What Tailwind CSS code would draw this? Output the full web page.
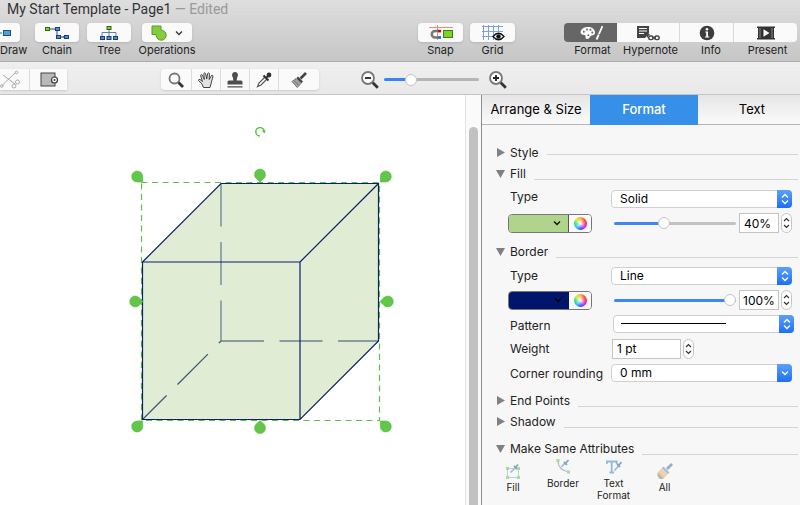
<!DOCTYPE html>
<html lang="en">
<head>
    <meta charset="UTF-8">
    <meta name="viewport" content="width=device-width, initial-scale=1.0">
    <title>My Start Template - Page1</title>
    <script src="https://cdn.jsdelivr.net/npm/@tailwindcss/browser@4"></script>
</head>
<body class="flex flex-col min-h-screen bg-white text-[#222] overflow-hidden font-['Inter','Liberation_Sans',sans-serif]">

    <!-- Title bar and main toolbar -->
    <header class="bg-linear-to-b from-[#dedede] to-[#c6c6c6] border-b border-[#acacac]">
        <h1 class="pl-[7px] text-sm leading-[18px] text-[#333] whitespace-nowrap font-[Roboto,'Liberation_Sans',sans-serif]">My Start Template - Page1 <span class="text-[#999]">— Edited</span></h1>
        <nav class="flex items-start pt-[5px] pb-[3px] pr-[3px] text-[11px] leading-4">
            <button class="flex flex-col w-[27px]">
                <span class="flex items-center w-5 h-[19px] bg-[#fafafa] rounded-r shadow-sm">
                    <svg class="w-4 h-3" viewBox="0 0 16 12" aria-hidden="true"><path d="M0 6h2" stroke="#29abe2" stroke-width="1.5"/><rect x="3.500" y="3.500" width="7" height="5" fill="#5b9bd5" stroke="#1f4e8c"/></svg>
                </span>
                <span>Draw</span>
            </button>
            <button class="flex flex-col items-center w-11 ml-2">
                <span class="flex items-center justify-center w-full h-[19px] bg-[#fafafa] rounded shadow-sm">
                    <svg class="w-6 h-4" viewBox="0 0 24 16" aria-hidden="true"><path d="M5 4h5M12 6v6h3M18 12h1" fill="none" stroke="#1c4587"/><g stroke="#1c3f77"><rect x=".5" y="2.500" width="4" height="3" fill="#7ed321" stroke="#2c6b10"/><rect x="10.500" y="2.500" width="4" height="3" fill="#4a90d9"/><rect x="11.500" y="10.500" width="4" height="3" fill="#4a90d9"/><rect x="19.500" y="10.500" width="4" height="3" fill="#4a90d9"/><path d="M16 12h3"/></g></svg>
                </span>
                Chain
            </button>
            <button class="flex flex-col items-center w-11 ml-2">
                <span class="flex items-center justify-center w-full h-[19px] bg-[#fafafa] rounded shadow-sm">
                    <svg class="w-5 h-4" viewBox="0 0 20 16" aria-hidden="true"><path d="M10 4v7M3 11V7.500h14V11" fill="none" stroke="#5b7fb5"/><rect x="8" y="1.500" width="4" height="3" fill="#7ed321" stroke="#2c6b10"/><g fill="#4a90d9" stroke="#1c3f77"><rect x="1.500" y="11.500" width="4" height="3"/><rect x="8" y="11.500" width="4" height="3"/><rect x="14.500" y="11.500" width="4" height="3"/></g></svg>
                </span>
                Tree
            </button>
            <button class="flex flex-col items-center w-[50px] ml-[11px]">
                <span class="flex items-center justify-center gap-2 w-full h-[19px] bg-[#fafafa] rounded shadow-sm">
                    <svg class="w-4 h-4" viewBox="0 0 16 16" aria-hidden="true"><path d="M1 1h9v4.200a5 5 0 1 1-4.800 5.600Q5 10 5 9.500H1z" fill="#84cc3c" stroke="#4f9e23"/></svg>
                    <svg class="w-2 h-2" viewBox="0 0 8 8" aria-hidden="true"><path d="M1 2.500l3 3 3-3" fill="none" stroke="#333" stroke-width="1.300"/></svg>
                </span>
                Operations
            </button>
            <button class="flex flex-col items-center w-[45px] ml-[226px]">
                <span class="flex items-center justify-center w-full h-[19px] bg-[#fafafa] rounded shadow-sm">
                    <svg class="w-6 h-4" viewBox="0 0 24 16" aria-hidden="true"><path d="M0 2.500h24M8.500 0v15" stroke="#ef8a72"/><path d="M9 6H6a3 3 0 0 0 0 6.500h3" fill="none" stroke="#777" stroke-width="2.400"/><path d="M9 4.800h3v2.600H9z" fill="#d0021b"/><path d="M9 11.200h3v2.600H9z" fill="#1565e0"/><rect x="14.500" y="5.500" width="9" height="7" fill="#7ed321" stroke="#3f7a1c"/></svg>
                </span>
                Snap
            </button>
            <button class="flex flex-col items-center w-[45px] ml-[7px]">
                <span class="flex items-center justify-center w-full h-[19px] bg-[#fafafa] rounded shadow-sm">
                    <svg class="w-6 h-4" viewBox="0 0 24 16" aria-hidden="true"><path d="M1 1.500h21M1 6.500h21M1 11.500h12M2.500 0v15M7.500 0v15M12.500 0v15M17.500 0v7" stroke="#7ba0dc"/><path d="M12 11.500q5.500-6.500 11 0q-5.500 6.500-11 0z" fill="#fff" stroke="#111" stroke-width="1.300"/><circle cx="17.500" cy="11.500" r="2.200" fill="#111"/></svg>
                </span>
                Grid
            </button>

            <div class="flex ml-auto text-[#222]">
                <button class="flex flex-col items-center w-[53px]">
                    <span class="flex items-center justify-center w-full h-[19px] bg-[#666] rounded-l">
                        <svg class="w-6 h-4" viewBox="0 0 24 16" aria-hidden="true"><path d="M8.500 2C13 2 16 4 16 7.500c0 2-1.500 3-3.500 3-1.500 0-1.500 3.500-4.500 3.500-1.500 0-1.500-1.500-1.500-3 0-1.500-2-1-3.500-1.500C0 8 2 2 8.500 2z" fill="#fff"/><g fill="#666"><circle cx="4.800" cy="6.700" r="1"/><circle cx="8" cy="4.600" r="1"/><circle cx="11.500" cy="4.800" r="1"/><circle cx="13.300" cy="7.600" r="1"/><circle cx="9.300" cy="10.200" r="1"/></g><path d="M23.500 1L20 9M19.800 9.500L17.500 14.500" stroke="#fff" stroke-width="1.800"/></svg>
                    </span>
                    <span class="pl-1">Format</span>
                </button>
                <button class="flex flex-col items-center w-[63px]">
                    <span class="flex items-center justify-center w-full h-[19px] bg-[#fafafa] border-r border-[#d8d8d8]">
                        <svg class="w-6 h-4" viewBox="0 0 24 16" aria-hidden="true"><path d="M1 1h12v7l-4 5H1z" fill="#444"/><path d="M3 3.500h8M3 6h8M3 8.500h5" stroke="#fff"/><path d="M10 8.500l4 .5-3 4z" fill="#444"/><g fill="none" stroke="#444" stroke-width="1.400"><rect x="12.700" y="11" width="4.500" height="3.600" rx="1.800"/><rect x="18.700" y="11" width="4.500" height="3.600" rx="1.800"/><path d="M16 12.800h4"/></g></svg>
                    </span>
                    <span class="pl-1">Hypernote</span>
                </button>
                <button class="flex flex-col items-center w-[54px]">
                    <span class="flex items-center justify-center w-full h-[19px] bg-[#fafafa] border-r border-[#d8d8d8]">
                        <svg class="w-4 h-4" viewBox="0 0 16 16" aria-hidden="true"><circle cx="8" cy="8" r="7.300" fill="#3d3d3d"/><circle cx="8" cy="4.300" r="1.300" fill="#fff"/><path d="M6.200 6.500H9v5h1.200v1H6v-1h1.200v-4h-1z" fill="#fff"/></svg>
                    </span>
                    <span class="pl-2">Info</span>
                </button>
                <button class="flex flex-col items-center w-[63px]">
                    <span class="flex items-center justify-center w-full h-[19px] bg-[#fafafa] rounded-r">
                        <svg class="w-[18px] h-4" viewBox="0 0 18 16" aria-hidden="true"><path d="M0 1.500h18v1.500h-1v10h1v1.500H0V13h1V3H0z" fill="#333"/><path d="M3 3v10M15 3v10" stroke="#888"/><path d="M6.500 4.200v7.600L12.500 8z" fill="#fff"/></svg>
                    </span>
                    <span class="pl-1">Present</span>
                </button>
            </div>
        </nav>
    </header>

    <!-- Drawing tools and zoom -->
    <div class="flex items-center h-[33px] pt-[3px] bg-linear-to-b from-[#efefef] to-[#e9e9e9] border-b border-[#c4c4c4]">
        <div class="flex h-[21px] bg-[#fafafa] shadow-sm">
            <button class="flex items-center w-[30px] border-r border-[#dcdcdc]" aria-label="Cut connector">
                <svg class="w-5 h-5" viewBox="0 0 20 20" fill="none" stroke="#aaa" aria-hidden="true"><path d="M2 15.500L15 3M3 5l12 9"/><circle cx="16.500" cy="2.500" r="1.300"/><circle cx="1.800" cy="16" r="1.300"/><circle cx="14" cy="16" r="2"/><circle cx="17.500" cy="12" r="2"/></svg>
            </button>
            <button class="flex items-center justify-center w-[37px]" aria-label="Object action">
                <svg class="w-5 h-4" viewBox="0 0 20 16" aria-hidden="true"><rect x="2" y="1" width="14" height="13" fill="#b9b9b9" stroke="#444"/><circle cx="15.500" cy="8" r="3" fill="#fff" stroke="#333" stroke-width="1.200"/><circle cx="15.500" cy="8" r="1" fill="#333"/></svg>
            </button>
        </div>
        <div class="flex h-[21px] ml-[94px] bg-[#fafafa] rounded shadow-sm">
            <button class="flex items-center justify-center w-[31px] border-r border-[#dcdcdc]" aria-label="Magnifier">
                <svg class="w-4 h-4" viewBox="0 0 16 16" fill="none" aria-hidden="true"><circle cx="6.500" cy="6.500" r="5" stroke="#777" stroke-width="1.800"/><path d="M10.500 10.500l4.500 4.500" stroke="#333" stroke-width="2.800"/></svg>
            </button>
            <button class="flex items-center justify-center w-[29px] border-r border-[#dcdcdc]" aria-label="Hand">
                <svg class="w-[18px] h-[18px]" viewBox="0 0 18 18" aria-hidden="true"><path d="M6.500 16.500L5 13 1.500 9.500q0-1.500 1.500-1l2.500 2L3.500 4.500q.5-1.500 1.700-.5L7.300 8.500 6.800 2.500q1-1.500 1.800 0L9.700 8l1-5.500q1-1.200 1.800 0L12.200 8.500l2.300-4q1.300-.7 1.500.6L14.200 12l-1.200 4.500z" fill="#e2e2e2" stroke="#333" stroke-width=".9" stroke-linejoin="round"/></svg>
            </button>
            <button class="flex items-center justify-center w-[29px] border-r border-[#dcdcdc]" aria-label="Stamp">
                <svg class="w-4 h-4" viewBox="0 0 16 16" fill="#4d4d4d" aria-hidden="true"><path d="M8 0a3 3 0 0 1 2.800 4Q9.500 6.500 9.700 8.500H14q1.500 0 1.500 1.500v2.500H.5V10Q.5 8.500 2 8.500h4.300Q6.500 6.500 5.200 4A3 3 0 0 1 8 0zM.5 14.200h15v1.300H.5z"/></svg>
            </button>
            <button class="flex items-center justify-center w-[29px] border-r border-[#dcdcdc]" aria-label="Eyedropper">
                <svg class="w-4 h-4" viewBox="0 0 16 16" aria-hidden="true"><path d="M9 5L3 11l-1.500 3.500L5 13l6-6" fill="#fff" stroke="#555" stroke-width="1.200"/><path d="M7.500 3.500l5 5M10 6l2.800-2.800" stroke="#333" stroke-width="2"/><circle cx="13" cy="3" r="2.400" fill="#333"/></svg>
            </button>
            <button class="flex items-center justify-center w-[40px]" aria-label="Format brush">
                <svg class="w-4 h-4" viewBox="0 0 16 16" aria-hidden="true"><path d="M15 1L9.500 6.500" stroke="#444" stroke-width="2.600"/><path d="M7 4.500l5 5-1.700 1.700-5-5z" fill="#444"/><path d="M5 6.500l5 5-3.800 4L1 9.500z" fill="#a3a3a3" stroke="#555" stroke-width=".7"/><path d="M3 8.500l5 5" stroke="#555" stroke-width=".7"/></svg>
            </button>
        </div>
        <div class="flex items-center ml-[42px]">
            <button aria-label="Zoom out">
                <svg class="block w-[18px] h-[18px]" viewBox="0 0 18 18" fill="none" aria-hidden="true"><circle cx="7" cy="7" r="6" fill="#fff" stroke="#777" stroke-width="1.800"/><path d="M11.800 11.800l5 5" stroke="#333" stroke-width="2.800"/><path d="M4 7h6" stroke="#222" stroke-width="1.800"/></svg>
            </button>
            <input type="range" value="25" aria-label="Zoom" class="appearance-none w-[95px] h-[3px] mx-[5px] rounded bg-[linear-gradient(to_right,#3b82f6_27%,#b5b5b5_27%)] [&::-webkit-slider-thumb]:appearance-none [&::-webkit-slider-thumb]:size-3 [&::-webkit-slider-thumb]:rounded-full [&::-webkit-slider-thumb]:bg-white [&::-webkit-slider-thumb]:border [&::-webkit-slider-thumb]:border-[#c4c4c4]">
            <button class="ml-[5px]" aria-label="Zoom in">
                <svg class="block w-[18px] h-[18px]" viewBox="0 0 18 18" fill="none" aria-hidden="true"><circle cx="7" cy="7" r="6" fill="#fff" stroke="#777" stroke-width="1.800"/><path d="M11.800 11.800l5 5" stroke="#333" stroke-width="2.800"/><path d="M4 7h6M7 4v6" stroke="#222" stroke-width="1.800"/></svg>
            </button>
        </div>
    </div>

    <main class="flex grow">
        <!-- Canvas with the selected cube -->
        <section class="grow min-w-0 overflow-hidden bg-white" aria-label="Canvas">
            <svg class="block w-[465px] h-[400px]" viewBox="0 95 465 400" fill="none">
                <path d="M142.500 262L221 183.500H378.500V341L300 419.500H142.500z" fill="#e0ecd3"/>
                <path d="M141.500 182.500h238v238h-238z" stroke="#5cc046" stroke-width="1.200" stroke-dasharray="6 4.500"/>
                <g stroke="#6c8391" stroke-width="1.300">
                    <path d="M221 183.500V341" stroke-dasharray="43 15.500"/>
                    <path d="M221 341H378.500" stroke-dasharray="43 15.500"/>
                    <path d="M142.500 419.500L221 341" stroke="#3f5873" stroke-dasharray="43 15.500" stroke-dashoffset="9"/>
                </g>
                <path d="M142.500 262L221 183.500H378.500V341L300 419.500H142.500zM142.500 262H300V419.500M300 262L378.500 183.500" stroke="#0c1f6b" stroke-width="1.200"/>
                <g fill="#62c64b" stroke="#54ba3c" stroke-width=".6">
                    <path d="M142.700 182v-5.500a5.500 5.500 0 1 0-5.500 5.500z"/>
                    <path d="M380.300 182v-5.500a5.500 5.500 0 1 1 5.500 5.500z"/>
                    <path d="M142.700 421v5.500a5.500 5.500 0 1 1-5.500-5.500z"/>
                    <path d="M380.300 421v5.500a5.500 5.500 0 1 0 5.500-5.500z"/>
                    <path d="M260 182l-4-3.700a5.500 5.500 0 1 1 8 0z"/>
                    <path d="M260 420.500l-4 3.700a5.500 5.500 0 1 0 8 0z"/>
                    <path d="M143 301.500l-4-4a5.500 5.500 0 1 0 0 8z"/>
                    <path d="M380 301.500l4-4a5.500 5.500 0 1 1 0 8z"/>
                </g>
                <path d="M260 136a4.200 4.200 0 1 1 4.200-4.200" stroke="#55bd3d" stroke-width="1.400"/>
                <path d="M261.800 130.500h4l-1.500 3z" fill="#55bd3d"/>
            </svg>
        </section>
        <div class="w-4 shrink-0 pl-[3px] pt-8 flex bg-[#fafafa] border-l border-[#e2e2e2]">
            <div class="w-[9px] bg-[#c1c1c1] rounded-t-full"></div>
        </div>

        <!-- Format panel -->
        <aside class="w-[319px] shrink-0 overflow-hidden bg-[#f7f7f7] border-l border-[#8f8f8f] text-xs">
            <div class="flex h-[30px] text-[13px] text-black">
                <button class="w-[108px] shrink-0 bg-linear-to-b from-[#e6e6e6] to-[#fafafa] border-b border-[#b5b5b5]">Arrange &amp; Size</button>
                <button class="w-[108px] shrink-0 bg-[#368fe8] text-white font-medium">Format</button>
                <button class="w-[108px] shrink-0 bg-linear-to-b from-[#e6e6e6] to-[#fafafa] border-b border-[#b5b5b5]">Text</button>
            </div>

            <div class="pt-[17px] pl-[26px]">
                <div class="flex items-center h-[21px] -ml-3 pr-[2px]">
                    <button class="flex items-center gap-[5px]"><svg class="w-[9px] h-[9px]" viewBox="0 0 9 9" fill="#808080" aria-hidden="true"><path d="M1 0l8 4.500L1 9z"/></svg>Style</button>
                    <hr class="grow ml-2 mt-[3px] border-[#d4d4d4]">
                </div>

                <div class="flex items-center h-[21px] -ml-3 pr-[2px]">
                    <button class="flex items-center gap-[5px]"><svg class="w-[9px] h-[9px]" viewBox="0 0 9 9" fill="#808080" aria-hidden="true"><path d="M0 1h9L4.500 9z"/></svg>Fill</button>
                    <hr class="grow ml-2 mt-[11px] border-[#d4d4d4]">
                </div>
                <div class="flex flex-col gap-[5px] pt-[6px] pb-2 pr-2">
                    <div class="flex items-center h-[18px]">
                        <label for="fill-type" class="w-[103px] pl-[2px] pb-1">Type</label>
                        <div class="relative grow h-full">
                            <select id="fill-type" class="appearance-none block w-full h-full pl-2 bg-white border border-[#cfcfcf] rounded text-black"><option>Solid</option></select>
                            <span class="absolute inset-y-0 right-0 flex items-center justify-center w-[15px] bg-linear-to-b from-[#5aa0fb] to-[#1c6ef5] rounded-r pointer-events-none"><svg class="w-2 h-3" viewBox="0 0 8 12" fill="none" stroke="#fff" stroke-width="1.300" aria-hidden="true"><path d="M1 4.500l3-3 3 3M1 7.500l3 3 3-3"/></svg></span>
                        </div>
                    </div>
                    <div class="flex items-center h-5">
                        <div class="flex w-[84px] h-[19px] border border-[#777] rounded overflow-hidden">
                            <button class="flex items-center justify-end grow pr-[7px] bg-[#b1d48c] border-r border-[#555]" aria-label="Fill color"><svg class="w-2 h-2" viewBox="0 0 8 8" fill="none" stroke="#111" stroke-width="1.400" aria-hidden="true"><path d="M1 2.500l3 3 3-3"/></svg></button>
                            <button class="flex items-center justify-center w-[22px] bg-[#fafafa]" aria-label="Fill color picker"><span class="size-[13px] rounded-full bg-[radial-gradient(circle,#fff,transparent_60%),conic-gradient(#ffb02e,#ff4d2e,#ff1f6b,#c020ff,#3a4dff,#22c8f5,#30e070,#c8f03c,#ffb02e)]"></span></button>
                        </div>
                        <input type="range" value="40" aria-label="Fill opacity" class="appearance-none w-[122px] h-[3px] ml-[22px] rounded bg-[linear-gradient(to_right,#3f87f8_41%,#c2c2c2_41%)] [&::-webkit-slider-thumb]:appearance-none [&::-webkit-slider-thumb]:size-3 [&::-webkit-slider-thumb]:rounded-full [&::-webkit-slider-thumb]:bg-white [&::-webkit-slider-thumb]:border [&::-webkit-slider-thumb]:border-[#c4c4c4]">
                        <input type="text" value="40%" aria-label="Fill opacity value" class="w-10 h-5 ml-[3px] pl-1 bg-white border border-[#c4c4c4] text-black">
                        <div class="flex flex-col w-[11px] h-5 ml-[2px] bg-white border border-[#c4c4c4] rounded-full">
                            <button class="flex items-end justify-center grow" aria-label="Increase fill opacity"><svg class="w-[7px] h-[6px]" viewBox="0 0 7 6" fill="none" stroke="#333" stroke-width="1.200" aria-hidden="true"><path d="M1 4l2.500-2.500L6 4"/></svg></button>
                            <button class="flex items-start justify-center grow" aria-label="Decrease fill opacity"><svg class="w-[7px] h-[6px]" viewBox="0 0 7 6" fill="none" stroke="#333" stroke-width="1.200" aria-hidden="true"><path d="M1 2l2.500 2.500L6 2"/></svg></button>
                        </div>
                    </div>
                </div>

                <div class="flex items-center h-[21px] -ml-3 pr-[2px]">
                    <button class="flex items-center gap-[5px]"><svg class="w-[9px] h-[9px]" viewBox="0 0 9 9" fill="#808080" aria-hidden="true"><path d="M0 1h9L4.500 9z"/></svg>Border</button>
                    <hr class="grow ml-2 mt-[11px] border-[#d4d4d4]">
                </div>
                <div class="flex flex-col gap-[5px] pt-[5px] pb-2 pr-2">
                    <div class="flex items-center h-[18px]">
                        <label for="border-type" class="w-[103px] pl-[2px]">Type</label>
                        <div class="relative grow h-full">
                            <select id="border-type" class="appearance-none block w-full h-full pl-2 bg-white border border-[#cfcfcf] rounded text-black"><option>Line</option></select>
                            <span class="absolute inset-y-0 right-0 flex items-center justify-center w-[15px] bg-linear-to-b from-[#5aa0fb] to-[#1c6ef5] rounded-r pointer-events-none"><svg class="w-2 h-3" viewBox="0 0 8 12" fill="none" stroke="#fff" stroke-width="1.300" aria-hidden="true"><path d="M1 4.500l3-3 3 3M1 7.500l3 3 3-3"/></svg></span>
                        </div>
                    </div>
                    <div class="flex items-center h-5">
                        <div class="flex w-[84px] h-[19px] border border-[#777] rounded overflow-hidden">
                            <button class="flex items-center justify-end grow pr-[7px] bg-[#00156b]" aria-label="Border color"><svg class="w-2 h-2" viewBox="0 0 8 8" fill="none" stroke="#000" stroke-width="1.400" aria-hidden="true"><path d="M1 2.500l3 3 3-3"/></svg></button>
                            <button class="flex items-center justify-center w-[22px] bg-[#fafafa]" aria-label="Border color picker"><span class="size-[13px] rounded-full bg-[radial-gradient(circle,#fff,transparent_60%),conic-gradient(#ffb02e,#ff4d2e,#ff1f6b,#c020ff,#3a4dff,#22c8f5,#30e070,#c8f03c,#ffb02e)]"></span></button>
                        </div>
                        <input type="range" value="100" aria-label="Border opacity" class="appearance-none w-[122px] h-[3px] ml-[22px] rounded bg-[#3f87f8] [&::-webkit-slider-thumb]:appearance-none [&::-webkit-slider-thumb]:size-3 [&::-webkit-slider-thumb]:rounded-full [&::-webkit-slider-thumb]:bg-white [&::-webkit-slider-thumb]:border [&::-webkit-slider-thumb]:border-[#c4c4c4]">
                        <input type="text" value="100%" aria-label="Border opacity value" class="w-10 h-5 ml-[3px] pl-[3px] bg-white border border-[#c4c4c4] text-black">
                        <div class="flex flex-col w-[11px] h-5 ml-[2px] bg-white border border-[#c4c4c4] rounded-full">
                            <button class="flex items-end justify-center grow" aria-label="Increase border opacity"><svg class="w-[7px] h-[6px]" viewBox="0 0 7 6" fill="none" stroke="#333" stroke-width="1.200" aria-hidden="true"><path d="M1 4l2.500-2.500L6 4"/></svg></button>
                            <button class="flex items-start justify-center grow" aria-label="Decrease border opacity"><svg class="w-[7px] h-[6px]" viewBox="0 0 7 6" fill="none" stroke="#333" stroke-width="1.200" aria-hidden="true"><path d="M1 2l2.500 2.500L6 2"/></svg></button>
                        </div>
                    </div>
                    <div class="flex items-center h-[18px]">
                        <label for="pattern" class="w-[105px] pl-[2px] pt-1">Pattern</label>
                        <div class="relative grow h-full -mr-[2px]">
                            <select id="pattern" class="appearance-none block w-full h-full bg-white border border-[#cfcfcf] rounded"><option value="solid"></option></select>
                            <span class="absolute left-2 top-2 w-[105px] border-t border-black pointer-events-none"></span>
                            <span class="absolute inset-y-0 right-0 flex items-center justify-center w-[15px] bg-linear-to-b from-[#5aa0fb] to-[#1c6ef5] rounded-r pointer-events-none"><svg class="w-2 h-3" viewBox="0 0 8 12" fill="none" stroke="#fff" stroke-width="1.300" aria-hidden="true"><path d="M1 4.500l3-3 3 3M1 7.500l3 3 3-3"/></svg></span>
                        </div>
                    </div>
                    <div class="flex items-center h-[21px]">
                        <label for="weight" class="w-[104px] pl-[2px] pt-px">Weight</label>
                        <input id="weight" type="text" value="1 pt" class="w-[69px] h-5 pl-1 bg-white border border-[#c4c4c4] text-black">
                        <div class="flex flex-col w-[11px] h-5 ml-[2px] bg-white border border-[#c4c4c4] rounded-full">
                            <button class="flex items-end justify-center grow" aria-label="Increase weight"><svg class="w-[7px] h-[6px]" viewBox="0 0 7 6" fill="none" stroke="#333" stroke-width="1.200" aria-hidden="true"><path d="M1 4l2.500-2.500L6 4"/></svg></button>
                            <button class="flex items-start justify-center grow" aria-label="Decrease weight"><svg class="w-[7px] h-[6px]" viewBox="0 0 7 6" fill="none" stroke="#333" stroke-width="1.200" aria-hidden="true"><path d="M1 2l2.500 2.500L6 2"/></svg></button>
                        </div>
                    </div>
                    <div class="flex items-center h-[18px]">
                        <label for="corner" class="w-[103px] pl-[2px] pt-[2px] whitespace-nowrap">Corner rounding</label>
                        <div class="relative grow h-full">
                            <select id="corner" class="appearance-none block w-full h-full pl-2 bg-white border border-[#cfcfcf] rounded text-black"><option>0 mm</option></select>
                            <span class="absolute inset-y-0 right-0 flex items-center justify-center w-[15px] bg-linear-to-b from-[#5aa0fb] to-[#1c6ef5] rounded-r pointer-events-none"><svg class="w-2 h-2" viewBox="0 0 8 8" fill="none" stroke="#fff" stroke-width="1.300" aria-hidden="true"><path d="M1 2.500l3 3 3-3"/></svg></span>
                        </div>
                    </div>
                </div>

                <div class="flex items-center h-[21px] -ml-3 pr-[2px]">
                    <button class="flex items-center gap-[5px]"><svg class="w-[9px] h-[9px]" viewBox="0 0 9 9" fill="#808080" aria-hidden="true"><path d="M1 0l8 4.500L1 9z"/></svg>End Points</button>
                    <hr class="grow ml-2 mt-[11px] border-[#d4d4d4]">
                </div>
                <div class="flex items-center h-[21px] -ml-3 pr-[2px]">
                    <button class="flex items-center gap-[5px]"><svg class="w-[9px] h-[9px]" viewBox="0 0 9 9" fill="#808080" aria-hidden="true"><path d="M1 0l8 4.500L1 9z"/></svg>Shadow</button>
                    <hr class="grow ml-2 mt-[11px] border-[#d4d4d4]">
                </div>
                <div class="flex items-center h-[21px] mt-[6px] -ml-3 pr-[2px]">
                    <button class="flex items-center gap-[5px]"><svg class="w-[9px] h-[9px]" viewBox="0 0 9 9" fill="#808080" aria-hidden="true"><path d="M0 1h9L4.500 9z"/></svg>Make Same Attributes</button>
                    <hr class="grow ml-2 mt-[11px] border-[#d4d4d4]">
                </div>
                <div class="flex items-start -ml-5 text-[10px] leading-3">
                    <button class="flex flex-col items-center gap-[2px] w-[50px] pt-1">
                        <svg class="w-4 h-4" viewBox="0 0 16 16" fill="none" aria-hidden="true"><path d="M2.500 5.500h11v9h-11z" stroke="#b8cfe0"/><path d="M5.500 9.500l4-4" stroke="#9dbbd2" stroke-width="1.600"/><path d="M9 3l3 3M10.500 4.500L13 1.500" stroke="#82a5c0" stroke-width="1.800"/><path d="M1 4h3v3H1zM12 4h3v3h-3zM1 13h3v3H1zM12 13h3v3h-3z" fill="#a9dc98"/></svg>
                        Fill
                    </button>
                    <button class="flex flex-col items-center gap-[2px] w-[50px]">
                        <svg class="w-4 h-4" viewBox="0 0 16 16" fill="none" aria-hidden="true"><path d="M3 2q0 9 11 11" stroke="#a6bfd2" stroke-width="1.200"/><path d="M6.500 8l3-3.500" stroke="#9dbbd2" stroke-width="1.600"/><path d="M9 3l3 3M10.500 4.500L13.500 1" stroke="#82a5c0" stroke-width="1.800"/><path d="M1.500 0h3v3h-3zM12 11.500h3v3h-3z" fill="#a9dc98"/></svg>
                        Border
                    </button>
                    <button class="flex flex-col items-center gap-[2px] w-[51px]">
                        <svg class="w-4 h-4" viewBox="0 0 16 16" fill="none" aria-hidden="true"><path d="M.800 5V2.500h9.900V5M5.700 2.500v11M3.500 13.500h4.500" stroke="#94b8d8" stroke-width="1.800"/><path d="M8.500 11.500l4-4.500" stroke="#9dbbd2" stroke-width="1.600"/><path d="M11 5l3 3M12.500 6.500L15.500 3" stroke="#82a5c0" stroke-width="1.800"/></svg>
                        Text<br>Format
                    </button>
                    <button class="flex flex-col items-center gap-[2px] w-[51px] pt-1">
                        <svg class="w-4 h-4" viewBox="0 0 16 16" fill="none" aria-hidden="true"><path d="M15 1L10 6" stroke="#93b0c8" stroke-width="2.800"/><path d="M6.500 3.500l6 6-1.800 1.800-6-6z" fill="#a8c0d3"/><path d="M4.500 5.500l6 6-3 3-6-6z" fill="#f3cfab"/><path d="M1.500 8.500l6 6-1.500 1.500H2L0 11z" fill="#eebf94"/><path d="M1 12l4 4" stroke="#9dbbd2" stroke-width="2"/></svg>
                        All
                    </button>
                </div>
            </div>
        </aside>
    </main>

</body>
</html>
